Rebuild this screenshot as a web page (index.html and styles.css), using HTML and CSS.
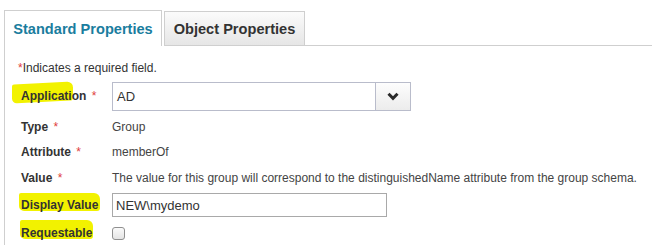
FILE: index.html
```html
<!DOCTYPE html>
<html>
<head>
<meta charset="utf-8">
<link rel="stylesheet" href="styles.css">
</head>
<body>
<div class="tabs">
  <div class="tab active">Standard Properties</div>
  <div class="tab">Object Properties</div>
  <div class="tab-fill"></div>
</div>
<div class="panel">
  <div class="note"><span class="req">*</span>Indicates a required field.</div>
  <div class="form">
    <div class="row row-app">
      <div class="label"><span class="mark mark-app"></span><span class="ltext">Application</span> <span class="req">*</span></div>
      <div class="value">
        <div class="select">
          <div class="select-text">AD</div>
          <div class="select-btn">
            <svg width="12" height="9" viewBox="0 0 12 9"><polyline points="1.5,1.8 6,6.3 10.5,1.8" fill="none" stroke="#2b2b2b" stroke-width="3"/></svg>
          </div>
        </div>
      </div>
    </div>
    <div class="row row-text">
      <div class="label"><span class="ltext">Type</span> <span class="req">*</span></div>
      <div class="value">Group</div>
    </div>
    <div class="row row-text">
      <div class="label"><span class="ltext">Attribute</span> <span class="req">*</span></div>
      <div class="value">memberOf</div>
    </div>
    <div class="row row-val">
      <div class="label"><span class="ltext">Value</span> <span class="req">*</span></div>
      <div class="value">The value for this group will correspond to the distinguishedName attribute from the group schema.</div>
    </div>
    <div class="row row-disp">
      <div class="label"><span class="mark mark-disp"></span><span class="ltext">Display Value</span></div>
      <div class="value"><div class="input">NEW\mydemo</div></div>
    </div>
    <div class="row row-req">
      <div class="label"><span class="mark mark-req"></span><span class="ltext">Requestable</span></div>
      <div class="value"><div class="checkbox"></div></div>
    </div>
  </div>
</div>
</body>
</html>
```
FILE: styles.css
```css
html, body {
  margin: 0;
  padding: 0;
  background: #fff;
  font-family: "Liberation Sans", Arial, sans-serif;
  font-size: 12px;
  color: #333;
  width: 652px;
  height: 245px;
  overflow: hidden;
}
.tabs {
  display: flex;
  align-items: flex-end;
  padding-top: 10px;
  margin-left: 4px;
  height: 36px;
}
.tab {
  box-sizing: border-box;
  font-weight: bold;
  font-size: 14.6px;
  display: flex;
  align-items: center;
  justify-content: center;
}
.tab.active {
  width: 158px;
  height: 36px;
  border: 1px solid #cfcfcf;
  border-bottom: none;
  color: #1a7d9e;
  background: #fff;
  padding-top: 1px;
}
.tab:not(.active) {
  width: 141px;
  height: 35px;
  margin-left: 2px;
  border: 1px solid #cfcfcf;
  color: #333;
  background: linear-gradient(#fbfbfb, #e6e6e6);
}
.tab-fill {
  flex: 1;
  height: 0;
  border-bottom: 1px solid #cfcfcf;
}
.panel {
  box-sizing: border-box;
  margin-left: 4px;
  border-left: 1px solid #cfcfcf;
  padding: 15px 0 0 13px;
  height: 199px;
}
.note {
  line-height: 14px;
  height: 14px;
}
.req {
  color: #e03c3c;
}
.form {
  margin-left: 3px;
  margin-top: 6px;
}
.row {
  display: flex;
  align-items: center;
}
.row-app { height: 30px; }
.row-text { height: 25px; }
.row-app + .row-text { margin-top: 3px; }
.row-val { height: 27px; }
.row-disp { height: 28px; }
.row-req { height: 27px; }
.label {
  width: 91px;
  flex: none;
  font-weight: bold;
  color: #333;
  position: relative;
  isolation: isolate;
  white-space: nowrap;
}
.label .req { font-weight: normal; margin-left: 2px; }
.value {
  color: #444;
  white-space: nowrap;
}
.mark {
  position: absolute;
  z-index: -1;
  background: #f2f200;
  border-radius: 2px 6px 3px 5px;
}
.mark-app {
  left: -9px;
  top: -6px;
  width: 61px;
  height: 19px;
  transform: skewY(-3deg);
}
.mark-disp {
  left: -2px;
  top: -5px;
  width: 81px;
  height: 18px;
}
.mark-req {
  left: -1px;
  top: -6px;
  width: 73px;
  height: 19px;
}
.select {
  box-sizing: border-box;
  width: 299px;
  height: 29px;
  border: 1px solid #b9bccb;
  display: flex;
  background: #fff;
}
.select-text {
  flex: 1;
  padding-left: 4px;
  display: flex;
  align-items: center;
  font-size: 13px;
  color: #333;
}
.select-btn {
  width: 34px;
  border-left: 1px solid #b9bccb;
  background: linear-gradient(#fdfdfd, #ececec);
  display: flex;
  align-items: center;
  justify-content: center;
}
.input {
  box-sizing: border-box;
  width: 275px;
  height: 24px;
  border: 1px solid #a9a9a9;
  padding-left: 3px;
  display: flex;
  align-items: center;
  font-size: 13px;
  color: #333;
}
.checkbox {
  box-sizing: border-box;
  width: 13px;
  height: 13px;
  border: 1px solid #8f8f8f;
  border-radius: 3px;
  background: linear-gradient(#fafafa, #e4e4e4);
  margin-top: 1px;
}
```
